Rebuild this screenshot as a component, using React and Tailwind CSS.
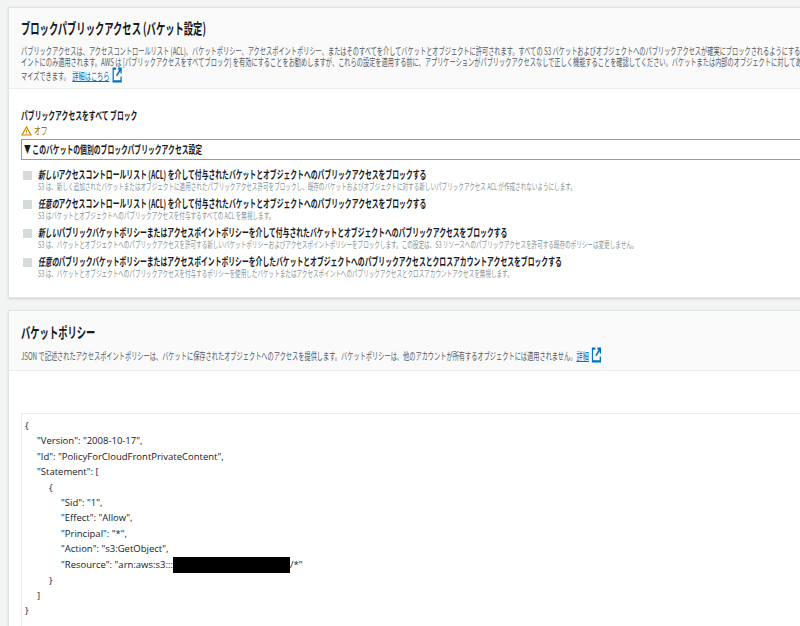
import React from "react";

const jp = { fontFamily: '"Noto Sans CJK JP", "Noto Sans", sans-serif' };

// the reference uses a narrow Japanese face; squeeze Noto horizontally to match
const Cond = ({ children, className = "" }) => (
  <div className={"origin-left scale-x-[0.62] whitespace-nowrap w-max " + className}>{children}</div>
);

const Ext = () => (
  <svg width="16" height="16" viewBox="0 0 10 10" className="inline-block ml-1 align-[-3px]">
    <path d="M4 1H1v8h8V6" fill="none" stroke="#0073bb" strokeWidth="1.3" />
    <path d="M6 1h3v3M9 1L4.5 5.5" fill="none" stroke="#0073bb" strokeWidth="1.3" />
  </svg>
);

const rows = [
  ["新しい", "アクセスコントロールリスト (ACL) を介して付与されたバケットとオブジェクトへのパブリックアクセスをブロックする", "S3 は、新しく追加されたバケットまたはオブジェクトに適用されたパブリックアクセス許可をブロックし、既存のバケットおよびオブジェクトに対する新しいパブリックアクセス ACL が作成されないようにします。"],
  ["任意の", "アクセスコントロールリスト (ACL) を介して付与されたバケットとオブジェクトへのパブリックアクセスをブロックする", "S3 はバケットとオブジェクトへのパブリックアクセスを付与するすべての ACL を無視します。"],
  ["新しい", "パブリックバケットポリシーまたはアクセスポイントポリシーを介して付与されたバケットとオブジェクトへのパブリックアクセスをブロックする", "S3 は、バケットとオブジェクトへのパブリックアクセスを許可する新しいバケットポリシーおよびアクセスポイントポリシーをブロックします。この設定は、S3 リソースへのパブリックアクセスを許可する既存のポリシーは変更しません。"],
  ["任意の", "パブリックバケットポリシーまたはアクセスポイントポリシーを介したバケットとオブジェクトへのパブリックアクセスとクロスアカウントアクセスをブロックする", "S3 は、バケットとオブジェクトへのパブリックアクセスを付与するポリシーを使用したバケットまたはアクセスポイントへのパブリックアクセスとクロスアカウントアクセスを無視します。"],
];

const json = [
  [0, "{"],
  [1, '"Version": "2008-10-17",'],
  [1, '"Id": "PolicyForCloudFrontPrivateContent",'],
  [1, '"Statement": ['],
  [2, "{"],
  [3, '"Sid": "1",'],
  [3, '"Effect": "Allow",'],
  [3, '"Principal": "*",'],
  [3, '"Action": "s3:GetObject",'],
  [3, "RES"],
  [2, "}"],
  [1, "]"],
  [0, "}"],
];

export default function App() {
  return (
    <div className="w-[800px] h-[626px] overflow-hidden bg-[#f2f3f3] pt-[7px] pl-[8px]" style={jp}>
      <div className="bg-white border border-[#e1e4e4] shadow-sm w-[820px] h-[291px] overflow-hidden">
        <div className="bg-[#fafafa] border-b border-[#eaeded] h-[81px] px-[12px] pt-[11px] overflow-hidden">
          <Cond className="text-[15px] font-bold text-[#16191f] leading-[18px]">ブロックパブリックアクセス (バケット設定)</Cond>
          <div className="text-[10px] text-[#545b64] leading-[11px] mt-[8px]">
            <Cond>パブリックアクセスは、アクセスコントロールリスト (ACL)、バケットポリシー、アクセスポイントポリシー、またはそのすべてを介してバケットとオブジェクトに許可されます。すべての S3 バケットおよびオブジェクトへのパブリックアクセスが確実にブロックされるようにするには、[パブリックアクセスをすべてブロック] を有効にします。これらの設定はこのバケットとそのアクセスポ</Cond>
            <Cond>イントにのみ適用されます。AWS は [パブリックアクセスをすべてブロック] を有効にすることをお勧めしますが、これらの設定を適用する前に、アプリケーションがパブリックアクセスなしで正しく機能することを確認してください。バケットまたは内部のオブジェクトに対してある程度のパブリックアクセスが必要な場合は、以下の個々の設定をカスタ</Cond>
            <Cond>マイズできます。<span className="text-[#0073bb] underline ml-1">詳細はこちら</span><Ext /></Cond>
          </div>
        </div>
        <div className="px-[12px] pt-[19px]">
          <Cond className="text-[11px] font-bold text-[#16191f] leading-[14px]">パブリックアクセスをすべて ブロック</Cond>
          <div className="flex items-center gap-[2px] text-[11px] text-[#a06a00] leading-[13px] mt-[2px]">
            <svg width="11" height="10" viewBox="0 0 11 10"><path d="M5.5 1L10 9H1z" fill="none" stroke="#d18800" strokeWidth="1.2" /><path d="M5.5 4v2.5M5.5 7.5v.8" stroke="#d18800" strokeWidth="1.1" /></svg>
            <Cond>オフ</Cond>
          </div>
          <div className="border border-[#44b9d6] h-[21px] mt-[2px] flex items-center px-[2px] text-[11px] font-bold text-[#16191f]">
            <Cond>▼ このバケットの個別のブロックパブリックアクセス設定</Cond>
          </div>
          <div className="pl-[2px] pt-[8px] flex flex-col gap-[5px]">
            {rows.map(([em, rest, sub], i) => (
              <div key={i} className="flex gap-[6px]">
                <div className="w-[9px] h-[9px] bg-[#d5dbdb] mt-[3px] shrink-0" />
                <div>
                  <Cond className="text-[11px] font-bold text-[#16191f] leading-[13px]"><i>{em}</i>{rest}</Cond>
                  <Cond className="text-[9px] text-[#879596] leading-[11px]">{sub}</Cond>
                </div>
              </div>
            ))}
          </div>
        </div>
      </div>
      <div className="bg-white border border-[#e1e4e4] shadow-sm w-[820px] h-[320px] mt-[12px] overflow-hidden">
        <div className="bg-[#fafafa] border-b border-[#eaeded] h-[60px] px-[12px] pt-[12px] overflow-hidden">
          <Cond className="text-[15px] font-bold text-[#16191f] leading-[18px]">バケットポリシー</Cond>
          <Cond className="text-[10px] text-[#545b64] leading-[11px] mt-[6px]">
            JSON で記述されたアクセスポイントポリシーは、バケットに保存されたオブジェクトへのアクセスを提供します。バケットポリシーは、他のアカウントが所有するオブジェクトには適用されません。
            <span className="text-[#0073bb] underline">詳細</span><Ext />
          </Cond>
        </div>
        <div className="px-[12px] pt-[42px]">
          <div className="border border-[#eaeded] pl-[3px] pt-[4px] h-[230px] text-[9.5px] text-[#16191f] leading-[15.4px]" style={{ fontFamily: '"Open Sans", sans-serif' }}>
            {json.map(([ind, t], i) => (
              <div key={i} className="whitespace-nowrap" style={{ paddingLeft: ind * 12 }}>
                {t === "RES" ? (
                  <span className="flex items-center">"Resource": "arn:aws:s3:::<span className="inline-block w-[117px] h-[16px] bg-black" />/*"</span>
                ) : t}
              </div>
            ))}
          </div>
        </div>
      </div>
    </div>
  );
}
